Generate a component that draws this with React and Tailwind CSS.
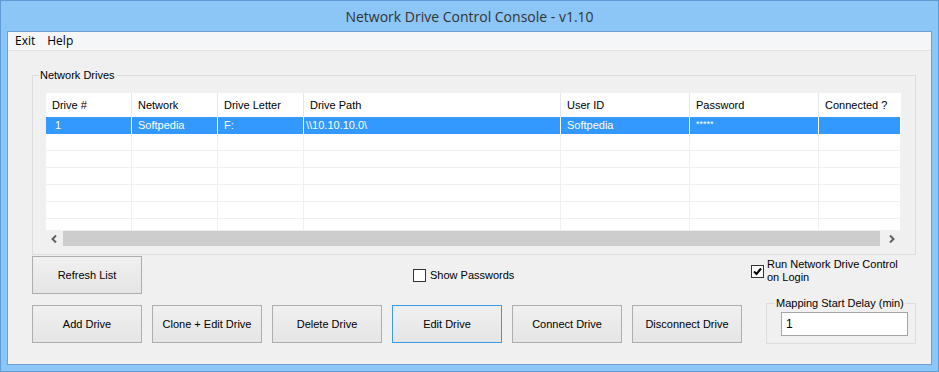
import React from 'react';

const COLS = [
  { label: 'Drive #', w: 86 },
  { label: 'Network', w: 86 },
  { label: 'Drive Letter', w: 86 },
  { label: 'Drive Path', w: 257 },
  { label: 'User ID', w: 129 },
  { label: 'Password', w: 129 },
  { label: 'Connected ?', w: 82 },
];

const GRID = 'grid grid-cols-[86px_86px_86px_257px_129px_129px_82px]';

const ROW = ['1', 'Softpedia', 'F:', '\\\\10.10.10.0\\', 'Softpedia', '*****', ''];

function Btn({ children, focused }) {
  return (
    <button
      className={`h-[38px] w-[110px] flex-none border bg-gradient-to-b from-[#f0f0f0] to-[#e5e5e5] text-[11px] text-black ${
        focused ? 'border-[#3c9be8]' : 'border-[#adadad]'
      }`}
    >
      {children}
    </button>
  );
}

function Check({ checked }) {
  return (
    <span className="flex h-[13px] w-[13px] flex-none items-center justify-center border border-[#333] bg-white">
      {checked && (
        <svg width="9" height="9" viewBox="0 0 9 9">
          <path d="M1 4.5 L3.5 7 L8 1.5" fill="none" stroke="#000" strokeWidth="2" />
        </svg>
      )}
    </span>
  );
}

export default function App() {
  return (
    <div className="flex h-[372px] w-[939px] flex-col border border-[#5f9bd4] bg-[#8bc6f7] font-['Liberation_Sans',Arial,sans-serif] text-[11px] text-black">
      {/* title bar */}
      <div className="flex h-[30px] flex-none items-center justify-center pt-[1px] font-['Open_Sans',sans-serif] text-[14px] text-[#333]">
        Network Drive Control Console - v1.10
      </div>

      {/* client */}
      <div className="mx-[6px] flex h-[334px] flex-none flex-col border border-[#6e9fd0] bg-[#f0f0f0]">
        <div className="flex h-[19px] flex-none items-center gap-[12px] border-b border-[#e3e3e3] bg-[#f5f6f7] pl-[7px] font-['Open_Sans',sans-serif] text-[12px]">
          <span>Exit</span>
          <span>Help</span>
        </div>

        <fieldset className="ml-[24px] mt-[17px] w-[884px] border border-[#dcdcdc] px-[13px] pb-[7px]">
          <legend className="ml-[-7px] px-[1px] leading-[14px]">Network Drives</legend>
          <div className="mt-[11px] w-[855px] bg-white">
            <div className={`${GRID} h-[24px]`}>
              {COLS.map((c) => (
                <div key={c.label} className="flex items-center border-r border-[#e3e8ef] pl-[6px] last:border-r-0">
                  {c.label}
                </div>
              ))}
            </div>
            <div className="h-[113px] overflow-hidden">
              {[0, 1, 2, 3, 4, 5, 6].map((r) => (
                <div key={r} className={`${GRID} h-[17px] border-b border-[#f0f0f0]`}>
                  {ROW.map((v, i) => (
                    <div
                      key={i}
                      className={`flex items-center border-r ${
                        r === 0 ? 'border-white bg-[#3399ff] text-white' : 'border-[#f0f0f0]'
                      } ${i === 0 ? 'pl-[9px]' : i === 3 ? 'pl-[2px]' : 'pl-[6px]'} ${i === 5 ? 'items-start pt-[1px] text-[9px]' : ''}`}
                    >
                      {r === 0 ? v : ''}
                    </div>
                  ))}
                </div>
              ))}
            </div>
            <div className="flex h-[17px] items-center bg-[#f0f0f0]">
              <div className="flex h-[17px] w-[17px] items-center justify-center">
                <svg width="7" height="8" viewBox="0 0 7 8">
                  <path d="M5 0.5 L1.5 4 L5 7.5" fill="none" stroke="#606060" strokeWidth="2" />
                </svg>
              </div>
              <div className="h-[15px] w-[817px] bg-[#cdcdcd]" />
              <div className="flex h-[17px] flex-1 items-center justify-end pr-[6px]">
                <svg width="7" height="8" viewBox="0 0 7 8">
                  <path d="M2 0.5 L5.5 4 L2 7.5" fill="none" stroke="#606060" strokeWidth="2" />
                </svg>
              </div>
            </div>
          </div>
        </fieldset>

        <div className="mt-[1px] flex h-[38px] pl-[24px]">
          <Btn>Refresh List</Btn>
          <div className="flex w-[609px] flex-none items-center gap-[4px] pl-[271px]">
            <Check />
            <span>Show Passwords</span>
          </div>
          <div className="mt-[2px] flex items-center gap-[3px] self-start">
            <Check checked />
            <span className="leading-[13px]">
              Run Network Drive Control
              <br />
              on Login
            </span>
          </div>
        </div>

        <div className="mt-[2px] flex items-start pl-[24px]">
          <div className="mt-[9px] flex gap-[10px]">
            <Btn>Add Drive</Btn>
            <Btn>Clone + Edit Drive</Btn>
            <Btn>Delete Drive</Btn>
            <Btn focused>Edit Drive</Btn>
            <Btn>Connect Drive</Btn>
            <Btn>Disconnect Drive</Btn>
          </div>
          <fieldset className="ml-[24px] w-[150px] border border-[#dcdcdc] pb-[7px] pl-[14px] pr-[7px]">
            <legend className="ml-[-6px] px-[1px] leading-[14px]">Mapping Start Delay (min)</legend>
            <div className="mt-[2px] flex h-[24px] w-[127px] items-center border border-[#a5a5a5] bg-white pl-[4px] text-[12px]">
              1
            </div>
          </fieldset>
        </div>
      </div>
    </div>
  );
}
